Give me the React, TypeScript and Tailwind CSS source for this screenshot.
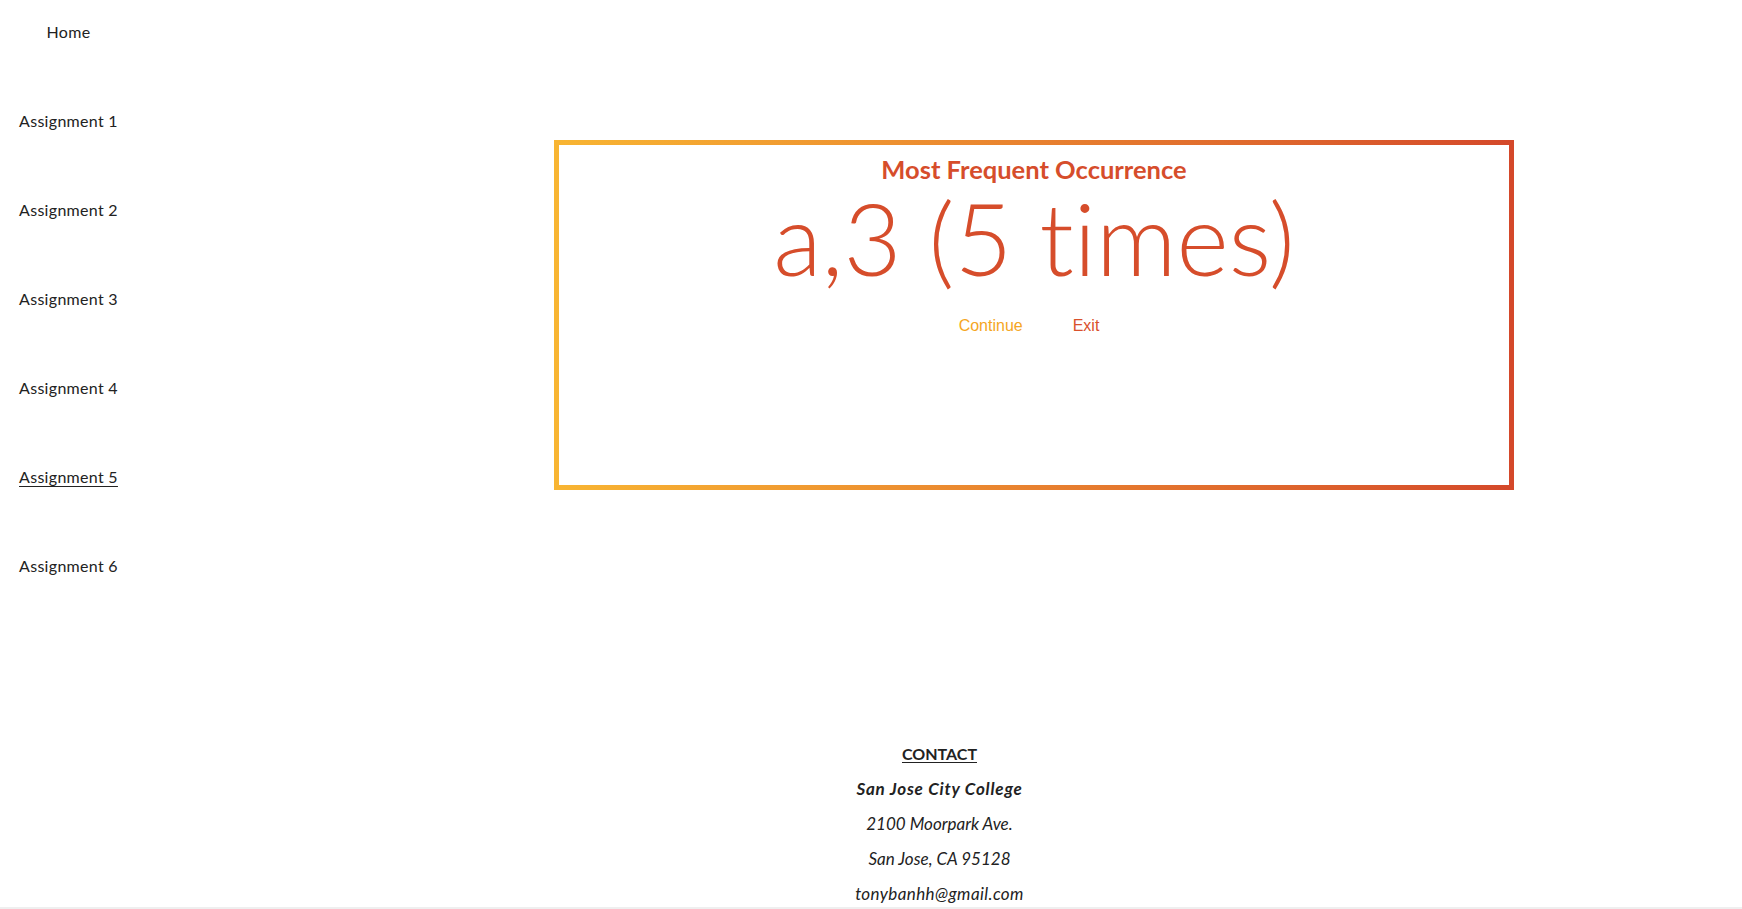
import React from "react";

const navItems = [
  "Home",
  "Assignment 1",
  "Assignment 2",
  "Assignment 3",
  "Assignment 4",
  "Assignment 5",
  "Assignment 6",
];

function SideNav() {
  return (
    <nav className="w-[137px] shrink-0 flex flex-col items-center pt-[20px] gap-[65px]">
      {navItems.map((item) => (
        <a
          key={item}
          href="#"
          className={
            "h-[24px] leading-[24px] text-[16px] tracking-[0.3px] text-[#222] whitespace-nowrap " +
            (item === "Assignment 5" ? "underline underline-offset-[3px]" : "no-underline")
          }
        >
          {item}
        </a>
      ))}
    </nav>
  );
}

function ResultBox() {
  return (
    <div className="w-[960px] h-[350px] p-[5px] bg-linear-to-r from-[#f8b532] to-[#d4482a]">
      <div className="w-full h-full bg-white flex flex-col items-center pt-[7px]">
        <h2 className="text-[25.5px] leading-[34px] font-bold text-[#d64d2b]">
          Most Frequent Occurrence
        </h2>
        <div className="text-[100px] leading-[102px] font-light text-[#d64d2b] whitespace-nowrap [font-variant-ligatures:none]">
          a,3 (5 times)
        </div>
        <div className="flex items-center gap-[50px] mt-[28px] pr-[10px] font-['Liberation_Sans',Arial,sans-serif] text-[16px] leading-[20px]">
          <a href="#" className="text-[#f5a623]">
            Continue
          </a>
          <a href="#" className="text-[#d9512c]">
            Exit
          </a>
        </div>
      </div>
    </div>
  );
}

function Contact() {
  return (
    <footer className="ml-[137px] mt-[164px] flex flex-col items-center gap-[11px] text-[17px] leading-[24px] text-[#222]">
      <p className="text-[16px] font-bold underline underline-offset-[2px]">CONTACT</p>
      <p className="font-bold italic tracking-[0.8px]">San Jose City College</p>
      <p className="italic">2100 Moorpark Ave.</p>
      <p className="italic">San Jose, CA 95128</p>
      <p className="italic tracking-[0.4px]">tonybanhh@gmail.com</p>
    </footer>
  );
}

export default function App() {
  return (
    <div className="h-[909px] overflow-hidden bg-white font-['Lato','Noto_Sans',sans-serif] flex flex-col">
      <div className="flex">
        <SideNav />
        <main className="flex-1 pl-[417px] pt-[140px]">
          <ResultBox />
        </main>
      </div>
      <Contact />
      <div className="mt-[1px] h-[40px] bg-[#efefef]" />
    </div>
  );
}
